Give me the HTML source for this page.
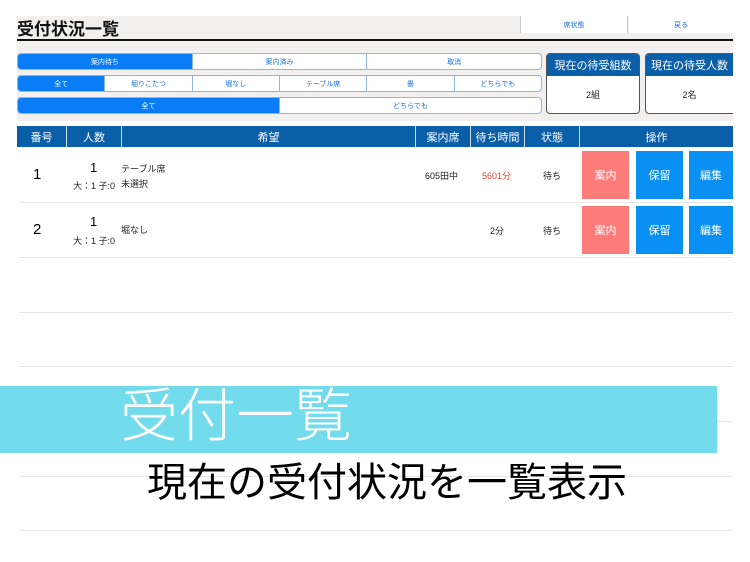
<!DOCTYPE html>
<html><head><meta charset="utf-8"><style>
*{margin:0;padding:0;box-sizing:border-box}
body{width:750px;height:562px;overflow:hidden;background:#fff;font-family:"Liberation Sans","Noto Sans CJK JP",sans-serif;position:relative}
.a{position:absolute}
.bg{left:17px;top:16px;width:716px;height:105px;background:#f1f0ee}
.c{display:flex;align-items:center;justify-content:center;text-align:center}
.seg{position:absolute;left:17px;width:525px;display:flex;border:1px solid #8fb6e4;border-radius:4px;overflow:hidden;background:#fff}
.seg div{flex:1;font-size:7px;color:#1a73d8;display:flex;align-items:center;justify-content:center;border-left:1px solid #8fb6e4}
.seg div:first-child{border-left:none}
.seg .on{background:#0a7cf6;color:#fff}
.box{position:absolute;top:53px;height:61px;border:1px solid #555;border-radius:4px;overflow:hidden;background:#fff}
.box .h{background:#0b5ea8;color:#fff;height:22px;font-size:11px;display:flex;align-items:center;justify-content:center}
.box .v{font-size:9px;display:flex;align-items:center;justify-content:center;height:37px;color:#222}
.th{position:absolute;top:126px;height:21px;background:#0b5ea8;color:#fff;font-size:11px;display:flex;align-items:center;justify-content:center;border-left:1px solid #cfe0f2}
.line{position:absolute;left:19px;width:714px;height:1px;background:#e6e6e6}
.btn{position:absolute;width:47px;height:48px;color:#fff;font-size:11px;display:flex;align-items:center;justify-content:center}
.t{position:absolute;font-size:9px;color:#222}
</style></head><body>
<div class="a bg"></div>
<div class="a" style="left:17px;top:15px;font-size:17px;font-weight:bold;color:#111">受付状況一覧</div>
<div class="a c" style="left:520px;top:16px;width:108px;height:17px;background:#fff;border-left:1px solid #ccc;border-right:1px solid #ccc;font-size:7px;color:#1a73d8">席状態</div>
<div class="a c" style="left:629px;top:16px;width:104px;height:17px;background:#fff;font-size:7px;color:#1a73d8">戻る</div>
<div class="a" style="left:17px;top:39px;width:716px;height:2px;background:#111"></div>

<div class="seg" style="top:53px;height:17px"><div class="on">案内待ち</div><div>案内済み</div><div>取消</div></div>
<div class="seg" style="top:75px;height:17px"><div class="on">全て</div><div>堀りこたつ</div><div>堀なし</div><div>テーブル席</div><div>畳</div><div>どちらでも</div></div>
<div class="seg" style="top:97px;height:17px"><div class="on">全て</div><div>どちらでも</div></div>

<div class="box" style="left:546px;width:94px"><div class="h">現在の待受組数</div><div class="v">2組</div></div>
<div class="box" style="left:645px;width:88px;border-right:none;border-radius:4px 0 0 4px"><div class="h">現在の待受人数</div><div class="v">2名</div></div>

<div class="th" style="left:17px;width:49px;border-left:none">番号</div>
<div class="th" style="left:66px;width:55px">人数</div>
<div class="th" style="left:121px;width:294px">希望</div>
<div class="th" style="left:415px;width:55px">案内席</div>
<div class="th" style="left:470px;width:54px">待ち時間</div>
<div class="th" style="left:524px;width:55px">状態</div>
<div class="th" style="left:579px;width:154px">操作</div>

<div class="a" style="left:33px;top:166px;font-size:15px">1</div>
<div class="a" style="left:90px;top:160px;font-size:13px">1</div>
<div class="t" style="left:73px;top:179px">大：1 子:0</div>
<div class="t" style="left:121px;top:162px">テーブル席</div>
<div class="t" style="left:121px;top:177px">未選択</div>
<div class="t" style="left:425px;top:169px">605田中</div>
<div class="t" style="left:482px;top:169px;color:#e8402a">5601分</div>
<div class="t" style="left:543px;top:169px">待ち</div>
<div class="btn" style="left:582px;top:151px;background:#fd7b79">案内</div>
<div class="btn" style="left:636px;top:151px;background:#0a90f2">保留</div>
<div class="btn" style="left:689px;top:151px;width:44px;background:#0a90f2">編集</div>
<div class="line" style="top:202px"></div>

<div class="a" style="left:33px;top:221px;font-size:15px">2</div>
<div class="a" style="left:90px;top:214px;font-size:13px">1</div>
<div class="t" style="left:73px;top:234px">大：1 子:0</div>
<div class="t" style="left:121px;top:223px">堀なし</div>
<div class="t" style="left:490px;top:224px">2分</div>
<div class="t" style="left:543px;top:224px">待ち</div>
<div class="btn" style="left:582px;top:206px;background:#fd7b79">案内</div>
<div class="btn" style="left:636px;top:206px;background:#0a90f2">保留</div>
<div class="btn" style="left:689px;top:206px;width:44px;background:#0a90f2">編集</div>
<div class="line" style="top:257px"></div>
<div class="line" style="top:312px"></div>
<div class="line" style="top:366px"></div>
<div class="line" style="top:421px"></div>
<div class="line" style="top:476px"></div>
<div class="line" style="top:530px"></div>

<div class="a" style="left:0;top:386px;width:717px;height:67px;background:#72dbec"></div>
<div class="a" style="left:120px;top:382px;font-size:58px;color:#fff;line-height:70px;font-weight:300">受付一覧</div>
<div class="a" style="left:147px;top:460px;font-size:40px;color:#000;line-height:46px">現在の受付状況を一覧表示</div>
</body></html>
